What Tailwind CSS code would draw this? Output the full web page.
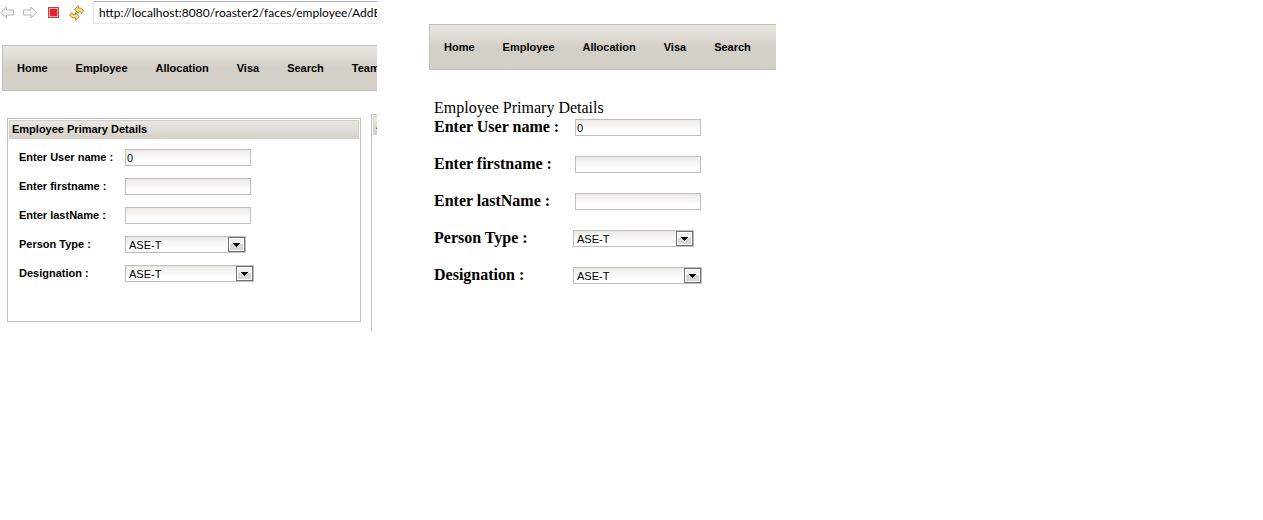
<!doctype html>
<html lang="en">
<head>
  <title>Employee</title>
  <meta charset="UTF-8">
  <meta name="viewport" content="width=device-width, initial-scale=1.0">
  <script src="https://cdn.jsdelivr.net/npm/@tailwindcss/browser@4"></script>
</head>
<body class="bg-white text-black">
  <main class="grid grid-cols-[377fr_52fr_347fr_487fr] items-start">

    <!-- Themed page -->
    <section class="min-w-0 overflow-hidden font-['Liberation_Sans',sans-serif] text-[11px]">
      <div class="flex items-center h-[25px]">
        <div class="flex shrink-0 items-center w-[93px] gap-2">
          <button type="button" aria-label="Back" class="w-[15px] h-4">
            <svg viewBox="0 0 15 16" width="15" height="16" fill="#f6f6f6" stroke="#b4b4b4"><path d="M.7 7.500 6.500 2V5H13.500V10H6.500V13Z"/></svg>
          </button>
          <button type="button" aria-label="Forward" class="w-[15px] h-4">
            <svg viewBox="0 0 15 16" width="15" height="16" fill="#f6f6f6" stroke="#b4b4b4"><path d="M13.500 7.500 8 2V5H.5V10H8V13Z"/></svg>
          </button>
          <button type="button" aria-label="Stop" class="w-[15px] h-4">
            <svg viewBox="0 0 15 16" width="15" height="16"><rect x="2.500" y="2.500" width="10" height="10" fill="#e02430" stroke="#b8444a"/><rect x="3.500" y="3.500" width="8" height="8" fill="none" stroke="#f4a3a6"/></svg>
          </button>
          <button type="button" aria-label="Refresh" class="w-[15px] h-4">
            <svg viewBox="0 0 15 16" width="15" height="16" fill="#fbdc80" stroke="#b98a2c" stroke-linejoin="round"><path d="M5.500 4.500 9.300.8V3C12 2.800 14 4 14.300 6.300L12.500 8.500C12.300 6.800 11 6.200 9.300 6.300V8.300Z"/><path d="M10.300 11.500 6.500 15.200V13C3.800 13.200 1.200 12 .7 9.700L2.800 7.500C3 9.200 4.800 9.800 6.500 9.700V7.700Z"/></svg>
          </button>
        </div>
        <input type="text" aria-label="Address" value="http://localhost:8080/roaster2/faces/employee/AddE" class="shrink-0 w-80 h-[23px] pl-[5px] border border-[#e3e9ef] border-t-[#abadb3] font-[Lato,sans-serif] text-[12px]">
      </div>

      <nav class="flex items-center gap-7 h-[46px] mt-5 ml-0.5 pl-3.5 border border-r-0 border-[#bebebe] bg-linear-to-b from-[#eae7e3] to-[#d4cfc7] to-50% font-bold">
        <a href="#">Home</a>
        <a href="#">Employee</a>
        <a href="#">Allocation</a>
        <a href="#">Visa</a>
        <a href="#">Search</a>
        <a href="#">Team</a>
      </nav>

      <div class="flex items-start mt-[23px] pl-[7px]">
        <form class="flex-1 mt-1 mr-2.5 p-px border border-[#bebebe]">
          <h2 class="h-[19px] pl-0.5 leading-[17px] border border-[#d4cfc7] bg-linear-to-b from-[#eae7e3] to-[#d6d0ca] font-bold">Employee Primary Details</h2>
          <div class="flex flex-col gap-3 pt-2.5 pl-2.5 pb-[38px]">
            <div class="flex items-center h-[17px]">
              <label for="user" class="w-[106px] font-bold">Enter User name :</label>
              <input id="user" type="text" value="0" class="w-[126px] h-[17px] pl-px border border-[#bebebe] bg-linear-to-b from-[#edeae6] to-white to-70%">
            </div>
            <div class="flex items-center h-[17px]">
              <label for="first" class="w-[106px] font-bold">Enter firstname :</label>
              <input id="first" type="text" class="w-[126px] h-[17px] pl-px border border-[#bebebe] bg-linear-to-b from-[#edeae6] to-white to-70%">
            </div>
            <div class="flex items-center h-[17px]">
              <label for="last" class="w-[106px] font-bold">Enter lastName :</label>
              <input id="last" type="text" class="w-[126px] h-[17px] pl-px border border-[#bebebe] bg-linear-to-b from-[#edeae6] to-white to-70%">
            </div>
            <div class="flex items-center h-[17px]">
              <label for="type" class="w-[106px] font-bold">Person Type :</label>
              <div class="relative">
                <select id="type" class="block appearance-none w-[121px] h-[17px] pl-[3px] border border-[#bebebe] bg-linear-to-b from-[#edeae6] to-white to-70%"><option>ASE-T</option></select>
                <svg class="absolute top-px right-px pointer-events-none" width="17" height="15" viewBox="0 0 17 15" shape-rendering="crispEdges"><path d="M.5.5H16.500V14.500H.5Z" fill="#fff" stroke="#707070"/><path d="M2 2H15V7H2Z" fill="#f0f0f0"/><path d="M2 7H15V13H2Z" fill="#d6d6d6"/><path d="M5 6H12V7H11V8H10V9H9V10H8V9H7V8H6V7H5Z"/></svg>
              </div>
            </div>
            <div class="flex items-center h-[17px]">
              <label for="designation" class="w-[106px] font-bold">Designation :</label>
              <div class="relative">
                <select id="designation" class="block appearance-none w-[129px] h-[17px] pl-[3px] border border-[#bebebe] bg-linear-to-b from-[#edeae6] to-white to-70%"><option>ASE-T</option></select>
                <svg class="absolute top-px right-px pointer-events-none" width="17" height="15" viewBox="0 0 17 15" shape-rendering="crispEdges"><path d="M.5.5H16.500V14.500H.5Z" fill="#fff" stroke="#707070"/><path d="M2 2H15V7H2Z" fill="#f0f0f0"/><path d="M2 7H15V13H2Z" fill="#d6d6d6"/><path d="M5 6H12V7H11V8H10V9H9V10H8V9H7V8H6V7H5Z"/></svg>
              </div>
            </div>
          </div>
        </form>
        <!-- Next panel runs off the edge -->
        <div class="w-1.5 h-[217px] overflow-hidden pt-px pl-px border-t border-l border-[#bebebe]">
          <h2 class="h-[19px] pl-0.5 leading-[17px] border border-r-0 border-[#d4cfc7] bg-linear-to-b from-[#eae7e3] to-[#d6d0ca] font-bold">A</h2>
        </div>
      </div>
    </section>

    <!-- Plain page -->
    <section class="col-start-3 min-w-0 overflow-hidden pt-6 font-['Liberation_Serif',serif] text-[16px]">
      <nav class="flex items-center gap-7 h-[46px] pl-3.5 border border-r-0 border-[#bebebe] bg-linear-to-b from-[#eae7e3] to-[#d4cfc7] to-50% font-['Liberation_Sans',sans-serif] text-[11px] font-bold">
        <a href="#">Home</a>
        <a href="#">Employee</a>
        <a href="#">Allocation</a>
        <a href="#">Visa</a>
        <a href="#">Search</a>
      </nav>

      <form class="mt-7 pl-[5px]">
        <h2 class="leading-5">Employee Primary Details</h2>
        <div class="flex flex-col gap-[18px]">
          <div class="flex items-center h-[19px]">
            <label for="user2" class="w-[141px] pb-0.5 font-bold">Enter User name :</label>
            <input id="user2" type="text" value="0" class="w-[126px] h-[17px] pl-px border border-[#bebebe] bg-linear-to-b from-[#edeae6] to-white to-70% font-['Liberation_Sans',sans-serif] text-[11px]">
          </div>
          <div class="flex items-center h-[19px]">
            <label for="first2" class="w-[141px] pb-0.5 font-bold">Enter firstname :</label>
            <input id="first2" type="text" class="w-[126px] h-[17px] pl-px border border-[#bebebe] bg-linear-to-b from-[#edeae6] to-white to-70% font-['Liberation_Sans',sans-serif] text-[11px]">
          </div>
          <div class="flex items-center h-[19px]">
            <label for="last2" class="w-[141px] pb-0.5 font-bold">Enter lastName :</label>
            <input id="last2" type="text" class="w-[126px] h-[17px] pl-px border border-[#bebebe] bg-linear-to-b from-[#edeae6] to-white to-70% font-['Liberation_Sans',sans-serif] text-[11px]">
          </div>
          <div class="flex items-center h-[19px]">
            <label for="type2" class="w-[139px] pb-0.5 font-bold">Person Type :</label>
            <div class="relative">
              <select id="type2" class="block appearance-none w-[121px] h-[17px] pl-[3px] border border-[#bebebe] bg-linear-to-b from-[#edeae6] to-white to-70% font-['Liberation_Sans',sans-serif] text-[11px]"><option>ASE-T</option></select>
              <svg class="absolute top-px right-px pointer-events-none" width="17" height="15" viewBox="0 0 17 15" shape-rendering="crispEdges"><path d="M.5.5H16.500V14.500H.5Z" fill="#fff" stroke="#707070"/><path d="M2 2H15V7H2Z" fill="#f0f0f0"/><path d="M2 7H15V13H2Z" fill="#d6d6d6"/><path d="M5 6H12V7H11V8H10V9H9V10H8V9H7V8H6V7H5Z"/></svg>
            </div>
          </div>
          <div class="flex items-center h-[19px]">
            <label for="designation2" class="w-[139px] pb-0.5 font-bold">Designation :</label>
            <div class="relative">
              <select id="designation2" class="block appearance-none w-[129px] h-[17px] pl-[3px] border border-[#bebebe] bg-linear-to-b from-[#edeae6] to-white to-70% font-['Liberation_Sans',sans-serif] text-[11px]"><option>ASE-T</option></select>
              <svg class="absolute top-px right-px pointer-events-none" width="17" height="15" viewBox="0 0 17 15" shape-rendering="crispEdges"><path d="M.5.5H16.500V14.500H.5Z" fill="#fff" stroke="#707070"/><path d="M2 2H15V7H2Z" fill="#f0f0f0"/><path d="M2 7H15V13H2Z" fill="#d6d6d6"/><path d="M5 6H12V7H11V8H10V9H9V10H8V9H7V8H6V7H5Z"/></svg>
            </div>
          </div>
        </div>
      </form>
    </section>

  </main>
</body>
</html>
